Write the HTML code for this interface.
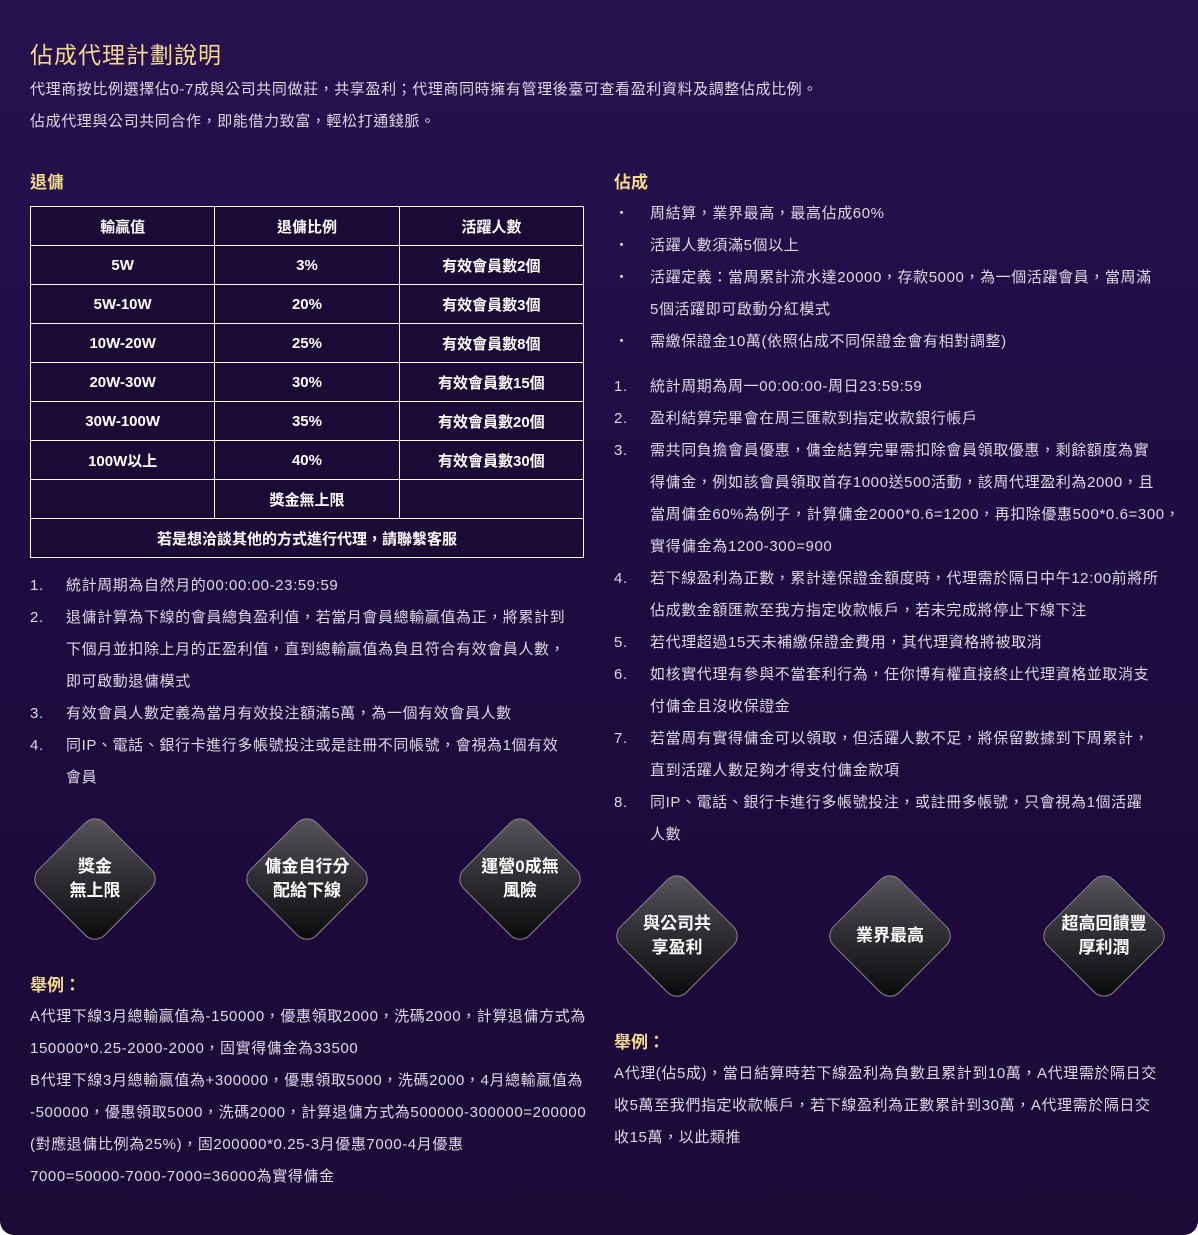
<!DOCTYPE html>
<html><head><meta charset="utf-8"><style>
*{margin:0;padding:0;box-sizing:border-box}
body{width:1198px;height:1235px;background:#fff;font-family:"Liberation Sans","Noto Sans CJK TC",sans-serif;overflow:hidden}
#w{position:absolute;left:0;top:0;width:1198px;height:1235px;background:linear-gradient(180deg,#27124f 0%,#1f0c42 40%,#1b0936 100%);border-radius:0 0 14px 14px;color:#e0dde6}
.a{position:absolute}
h1{position:absolute;left:30px;top:36px;font-size:23px;color:#f2d98c;font-weight:normal;letter-spacing:1px}
h2{position:absolute;font-size:17px;color:#f2d98c;font-weight:bold}
.p{font-size:15px;line-height:32px;color:#dcd8e4;white-space:nowrap;letter-spacing:0.6px}
table{position:absolute;left:30px;top:206px;width:554px;border-collapse:collapse;background:#1c0a36}
td{border:1.5px solid #fff;height:39px;text-align:center;font-size:15px;font-weight:bold;color:#fff;width:33.3%}
ol{list-style:none}
li{position:relative;padding-left:36px;font-size:15px;line-height:32px;color:#dcd8e4;white-space:nowrap;letter-spacing:0.6px}
li b{position:absolute;left:0;top:0;font-weight:normal}
.d{position:absolute;width:126px;height:126px}
.d i{position:absolute;left:16px;top:16px;width:94px;height:94px;transform:rotate(45deg);border-radius:14px;border:1px solid #8a8690;background:linear-gradient(135deg,#5a585e 0%,#323036 45%,#141316 85%,#050505 100%)}
.d span{position:absolute;left:0;top:0;width:126px;height:126px;display:flex;align-items:center;justify-content:center;text-align:center;color:#fff;font-size:17px;font-weight:bold;line-height:24px}
</style></head><body><div id="w">
<h1>佔成代理計劃說明</h1>
<div class="a p" style="left:30px;top:74px">代理商按比例選擇佔0-7成與公司共同做莊，共享盈利；代理商同時擁有管理後臺可查看盈利資料及調整佔成比例。<br>佔成代理與公司共同合作，即能借力致富，輕松打通錢脈。</div>
<h2 style="left:30px;top:168px">退傭</h2>
<h2 style="left:614px;top:168px">佔成</h2>
<table>
<tr><td>輸贏值</td><td>退傭比例</td><td>活躍人數</td></tr>
<tr><td>5W</td><td>3%</td><td>有效會員數2個</td></tr>
<tr><td>5W-10W</td><td>20%</td><td>有效會員數3個</td></tr>
<tr><td>10W-20W</td><td>25%</td><td>有效會員數8個</td></tr>
<tr><td>20W-30W</td><td>30%</td><td>有效會員數15個</td></tr>
<tr><td>30W-100W</td><td>35%</td><td>有效會員數20個</td></tr>
<tr><td>100W以上</td><td>40%</td><td>有效會員數30個</td></tr>
<tr><td></td><td>獎金無上限</td><td></td></tr>
<tr><td colspan="3">若是想洽談其他的方式進行代理，請聯繫客服</td></tr>
</table>
<ol class="a" style="left:30px;top:570px;width:560px">
<li><b>1.</b>統計周期為自然月的00:00:00-23:59:59</li>
<li><b>2.</b>退傭計算為下線的會員總負盈利值，若當月會員總輸贏值為正，將累計到<br>下個月並扣除上月的正盈利值，直到總輸贏值為負且符合有效會員人數，<br>即可啟動退傭模式</li>
<li><b>3.</b>有效會員人數定義為當月有效投注額滿5萬，為一個有效會員人數</li>
<li><b>4.</b>同IP、電話、銀行卡進行多帳號投注或是註冊不同帳號，會視為1個有效<br>會員</li>
</ol>
<div class="d" style="left:32px;top:816px"><i></i><span>獎金<br>無上限</span></div>
<div class="d" style="left:244px;top:816px"><i></i><span>傭金自行分<br>配給下線</span></div>
<div class="d" style="left:457px;top:816px"><i></i><span>運營0成無<br>風險</span></div>
<h2 style="left:30px;top:971px">舉例：</h2>
<div class="a p" style="left:30px;top:1001px">A代理下線3月總輸贏值為-150000，優惠領取2000，洗碼2000，計算退傭方式為<br>150000*0.25-2000-2000，固實得傭金為33500<br>B代理下線3月總輸贏值為+300000，優惠領取5000，洗碼2000，4月總輸贏值為<br>-500000，優惠領取5000，洗碼2000，計算退傭方式為500000-300000=200000<br>(對應退傭比例為25%)，固200000*0.25-3月優惠7000-4月優惠<br>7000=50000-7000-7000=36000為實得傭金</div>
<ol class="a" style="left:614px;top:198px;width:556px">
<li><b>・</b>周結算，業界最高，最高佔成60%</li>
<li><b>・</b>活躍人數須滿5個以上</li>
<li><b>・</b>活躍定義：當周累計流水達20000，存款5000，為一個活躍會員，當周滿<br>5個活躍即可啟動分紅模式</li>
<li><b>・</b>需繳保證金10萬(依照佔成不同保證金會有相對調整)</li>
</ol>
<ol class="a" style="left:614px;top:371px;width:556px">
<li><b>1.</b>統計周期為周一00:00:00-周日23:59:59</li>
<li><b>2.</b>盈利結算完畢會在周三匯款到指定收款銀行帳戶</li>
<li><b>3.</b>需共同負擔會員優惠，傭金結算完畢需扣除會員領取優惠，剩餘額度為實<br>得傭金，例如該會員領取首存1000送500活動，該周代理盈利為2000，且<br>當周傭金60%為例子，計算傭金2000*0.6=1200，再扣除優惠500*0.6=300，<br>實得傭金為1200-300=900</li>
<li><b>4.</b>若下線盈利為正數，累計達保證金額度時，代理需於隔日中午12:00前將所<br>佔成數金額匯款至我方指定收款帳戶，若未完成將停止下線下注</li>
<li><b>5.</b>若代理超過15天未補繳保證金費用，其代理資格將被取消</li>
<li><b>6.</b>如核實代理有參與不當套利行為，任你博有權直接終止代理資格並取消支<br>付傭金且沒收保證金</li>
<li><b>7.</b>若當周有實得傭金可以領取，但活躍人數不足，將保留數據到下周累計，<br>直到活躍人數足夠才得支付傭金款項</li>
<li><b>8.</b>同IP、電話、銀行卡進行多帳號投注，或註冊多帳號，只會視為1個活躍<br>人數</li>
</ol>
<div class="d" style="left:614px;top:873px"><i></i><span>與公司共<br>享盈利</span></div>
<div class="d" style="left:827px;top:873px"><i></i><span>業界最高</span></div>
<div class="d" style="left:1041px;top:873px"><i></i><span>超高回饋豐<br>厚利潤</span></div>
<h2 style="left:614px;top:1028px">舉例：</h2>
<div class="a p" style="left:614px;top:1058px">A代理(佔5成)，當日結算時若下線盈利為負數且累計到10萬，A代理需於隔日交<br>收5萬至我們指定收款帳戶，若下線盈利為正數累計到30萬，A代理需於隔日交<br>收15萬，以此類推</div>
</div></body></html>
